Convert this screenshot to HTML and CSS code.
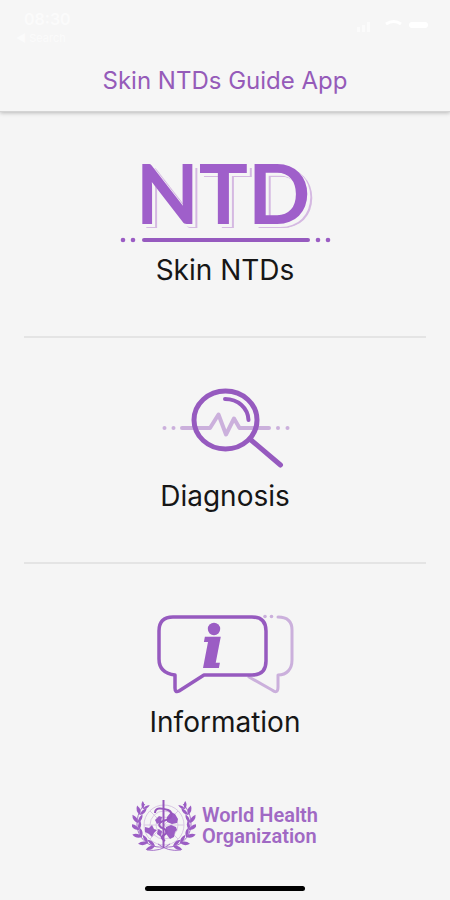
FILE: index.html
```html
<!DOCTYPE html>
<html lang="en">
<head>
<meta charset="utf-8">
<meta name="viewport" content="width=device-width, initial-scale=1">
<title>Skin NTDs Guide App</title>
<link rel="stylesheet" href="styles.css">
</head>
<body>
<header class="header">
  <div class="status">
    <div class="status-left">
      <span class="time">08:30</span>
      <span class="back">◀ Search</span>
    </div>
    <svg class="status-icons" viewBox="0 0 74 16" aria-hidden="true">
      <g class="status-faint"><rect x="1" y="9" width="3" height="5"/><rect x="6" y="7" width="3" height="7"/><rect x="11" y="4" width="3" height="10"/></g>
      <path class="status-wifi" d="M30 6q8-5 15 0"/>
      <rect class="status-battery" x="53" y="4" width="19" height="6" rx="3"/>
    </svg>
  </div>
  <h1 class="title">Skin NTDs Guide App</h1>
</header>

<main class="menu">
  <a class="item" href="#skin-ntds">
    <span class="art ntd" aria-hidden="true">
      <span class="ntd-word">NTD</span>
      <svg class="ntd-rule" viewBox="0 0 220 8">
        <path class="line" d="M29 4H193"/>
        <g class="solid"><circle cx="8" cy="4" r="2.3"/><circle cx="18" cy="4" r="2.3"/><circle cx="203" cy="4" r="2.3"/><circle cx="213" cy="4" r="2.3"/></g>
      </svg>
    </span>
    <span class="label">Skin NTDs</span>
  </a>
  <a class="item" href="#diagnosis">
    <svg class="art" viewBox="115 376 220 100" aria-hidden="true">
      <path class="line pale" d="M182 428H210L218.500 414.500 226 434.500 234 418.500 239.500 428H269"/>
      <g class="solid-pale"><circle cx="164.500" cy="428" r="2"/><circle cx="173.500" cy="428" r="2"/><circle cx="278" cy="428" r="2"/><circle cx="287.500" cy="428" r="2"/></g>
      <ellipse class="line thick" cx="225.500" cy="420" rx="31.500" ry="29"/>
      <path class="line" d="M225 399C238 399 248 408 248.500 420"/>
      <path class="line thick" d="M251 440L280.500 465"/>
    </svg>
    <span class="label">Diagnosis</span>
  </a>
  <a class="item" href="#information">
    <svg class="art" viewBox="115 602 220 100" aria-hidden="true">
      <path class="line pale thin" d="M278 617C288 617 292 622 292 630V660C292 669 287 675 278 675V687C278 692 276 693 272 690L249 677"/>
      <g class="solid-pale"><circle cx="265" cy="616.500" r="1.800"/><circle cx="271.500" cy="616.500" r="1.800"/></g>
      <path class="line bubble" d="M173 617H252Q266 617 266 631V661Q266 675 252 675H204L179 691Q175 693 175 688V675Q159 673 159 659V631Q159 617 173 617Z"/>
      <circle class="solid" cx="214" cy="629" r="6.200"/>
      <text class="info-letter" x="201" y="667">ı</text>
    </svg>
    <span class="label">Information</span>
  </a>
</main>

<footer class="footer">
  <div class="who">
    <svg class="emblem" viewBox="0 0 64 56" aria-hidden="true">
      <defs>
        <path id="leaf" d="M0 0Q-6-2-6-8Q0-6 0 0ZM0 0Q5-3 4-9Q-1-5 0 0Z"/>
        <g id="branch">
          <path class="stem" d="M30 49C16 50 5 39 5 26C5 18 8 11 13 6"/>
          <use href="#leaf" transform="translate(23 48) rotate(-75)"/>
          <use href="#leaf" transform="translate(16 45) rotate(-57)"/>
          <use href="#leaf" transform="translate(10 39) rotate(-38)"/>
          <use href="#leaf" transform="translate(7 32) rotate(-18)"/>
          <use href="#leaf" transform="translate(6 25) rotate(3)"/>
          <use href="#leaf" transform="translate(8 17) rotate(20)"/>
          <use href="#leaf" transform="translate(11 11) rotate(35) scale(.8)"/>
          <path class="stem" d="M15 52Q28 54 38 46"/>
        </g>
      </defs>
      <g class="grid"><circle cx="32" cy="27" r="20"/><circle cx="32" cy="27" r="14"/><circle cx="32" cy="27" r="8"/><path d="M12 27H52M18 13L46 41M46 13L18 41"/></g>
      <g class="solid">
        <use href="#branch"/>
        <use href="#branch" transform="translate(64 0) scale(-1 1)"/>
        <path d="M13 29l4 1 3-3 2 4 3 1-3 3-2 4-3-3-4-2zM34 29l5-2 5 2 1 3-2 2-1 5-4 2-3-4-2-3zM35 19l4-5 4 2 3 5-1 4-5 1-5-2zM23 22l4-4 3 1-1 5-4 2zM26 31l4 2-1 6-4-3z"/>
      </g>
      <path class="staff" d="M31.500 2V50"/>
      <path class="snake" d="M23 15C23 9 30 10 36 12C42 15 40 20 34 22C27 24 25 27 30 30C36 32 36 35 32 37C28 39 30 41 33 43"/>
    </svg>
    <p class="who-name">World Health<br>Organization</p>
  </div>
  <div class="home"></div>
</footer>
</body>
</html>
```
FILE: styles.css
```css
* { box-sizing: border-box; }

body {
  margin: 0;
  min-height: 100vh;
  display: flex;
  flex-direction: column;
  background: #f5f5f5;
  color: #161616;
  font-family: Inter, "Liberation Sans", sans-serif;
}

.header {
  height: 112px;
  background: #f6f6f6;
  border-bottom: 1px solid #d4d4d4;
  box-shadow: 0 1px 4px rgba(0, 0, 0, .25);
}

.status {
  height: 61px;
  padding: 10px 20px 0 16px;
  display: flex;
  justify-content: space-between;
  color: #fbfbfb;
}
.status-left { display: flex; flex-direction: column; }
.time { padding-left: 8px; font-size: 16px; line-height: 18px; font-weight: 600; }
.back { font-size: 11px; line-height: 20px; }
.status-icons { width: 74px; height: 16px; margin-top: 8px; }
.status-faint { fill: #fbfbfb; }
.status-wifi { fill: none; stroke: #fff; stroke-width: 3; }
.status-battery { fill: #fff; }

.title {
  margin: 0;
  text-align: center;
  font-size: 24px;
  line-height: 40px;
  font-weight: 400;
  color: #955bb9;
}

.menu { flex: 1; padding: 0 24px; }
.item {
  height: 226px;
  padding-top: 38px;
  display: flex;
  flex-direction: column;
  align-items: center;
  gap: 2px;
  color: inherit;
  text-decoration: none;
  border-bottom: 2px solid #e4e4e4;
}
.item:last-child { border-bottom: 0; }
.art { width: 220px; height: 100px; display: block; }
.label { font-size: 28px; line-height: 36px; }

.ntd {
  display: flex;
  flex-direction: column;
  align-items: center;
  gap: 2px;
}
.ntd-word {
  padding-right: 4px;
  font-family: Lato, sans-serif;
  font-weight: 700;
  font-size: 82px;
  line-height: 84px;
  color: #9f5fca;
  text-shadow: 2px 2px 0 #f5f5f5, 3px 3px 0 #f5f5f5, 4px 4px 0 #d5b9e2, 5px 4px 0 #d5b9e2;
}
.ntd-rule { width: 220px; height: 8px; }

.line {
  fill: none;
  stroke: #965abf;
  stroke-width: 4;
  stroke-linecap: round;
  stroke-linejoin: round;
}
.thick { stroke-width: 5; }
.thin { stroke-width: 3; }
.bubble { stroke-width: 3.500; }
.pale { stroke: #cbb0dc; }
.solid { fill: #9b5dc4; }
.solid-pale { fill: #cbb0dc; }
.info-letter {
  fill: #9b5dc4;
  stroke: #9b5dc4;
  stroke-width: 2;
  font-family: "DejaVu Serif", serif;
  font-style: italic;
  font-weight: 700;
  font-size: 56px;
}

.footer {
  padding: 8px 0 9px;
  display: flex;
  flex-direction: column;
  align-items: center;
  gap: 32px;
}
.who { display: flex; align-items: center; gap: 6px; }
.emblem { width: 64px; height: 56px; }
.stem { fill: none; stroke: #a673ca; stroke-width: 1; }
.grid { fill: none; stroke: #d9c8e4; stroke-width: 1; }
.staff { fill: none; stroke: #9656bd; stroke-width: 2; }
.snake { fill: none; stroke: #9656bd; stroke-width: 2; }
.who-name {
  margin: 0;
  font-family: Roboto, sans-serif;
  font-size: 20px;
  line-height: 21px;
  font-weight: 600;
  color: #a069c4;
}
.home { width: 160px; height: 5px; border-radius: 3px; background: #000; }
```
